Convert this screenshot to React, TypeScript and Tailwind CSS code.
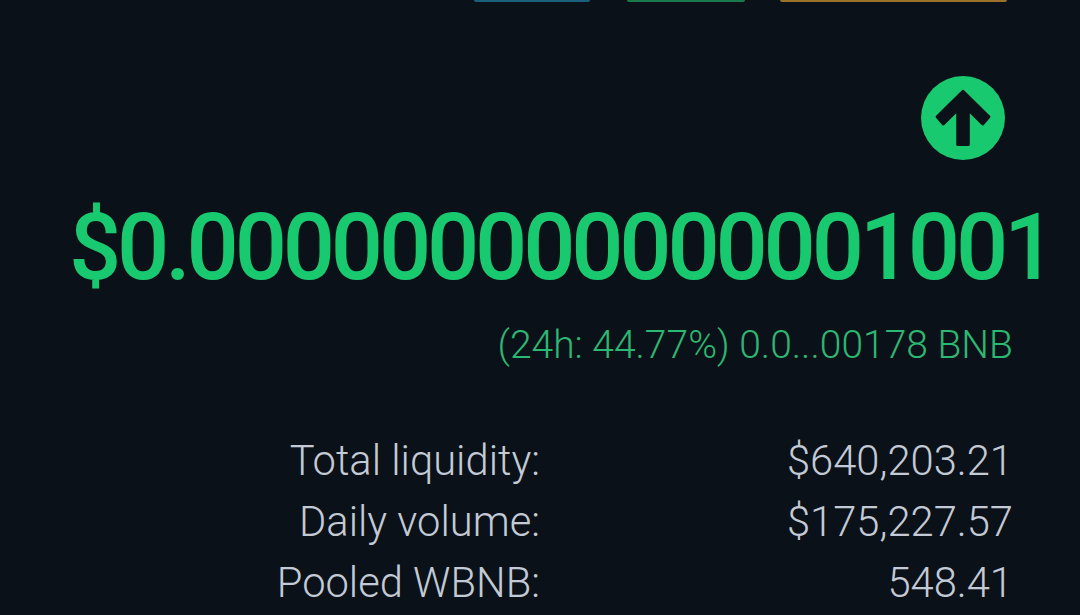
export default function App() {
  const stats = [
    { label: "Total liquidity:", value: "$640,203.21" },
    { label: "Daily volume:", value: "$175,227.57" },
    { label: "Pooled WBNB:", value: "548.41" },
  ];

  return (
    <div className="w-[1080px] h-[615px] overflow-hidden bg-[#0a1118] font-['Roboto',sans-serif]">
      {/* Bottom edges of the buttons cut off at the top */}
      <div className="flex justify-end pr-[73px] h-[2px]">
        <div className="w-[116px] rounded-b-sm bg-[#1a5f7c]" />
        <div className="w-[118px] ml-[37px] rounded-b-sm bg-[#1a7a4c]" />
        <div className="w-[227px] ml-[35px] rounded-b-sm bg-[#9a7128]" />
      </div>

      <div className="flex justify-end pr-[75px] mt-[74px]">
        <svg width="84" height="84" viewBox="0 0 84 84">
          <circle cx="42" cy="42" r="42" fill="#19c970" />
          <path
            d="M42 15.4 L16.1 40.7 L22.3 47.9 L36.7 33.7 V68.5 H47.3 V33.7 L61.7 47.9 L67.9 40.7 Z"
            fill="#0a1118"
            stroke="#0a1118"
            strokeWidth="3"
            strokeLinejoin="round"
          />
        </svg>
      </div>

      <div className="mt-[33px] pl-[69px] text-[92px] leading-[110px] tracking-[-4.2px] font-medium text-[#19c970] whitespace-nowrap">
        $0.000000000000001001
      </div>

      <div className="mt-[20px] pr-[67px] text-right text-[39px] leading-[44px] font-light text-[#2ab872] whitespace-nowrap">
        (24h: 44.77%) 0.0...00178 BNB
      </div>

      <div className="mt-[70px] grid grid-cols-[540px_473px] gap-y-[13px] text-[41.7px] leading-[48px] font-light text-[#c3cad6]">
        {stats.map((s) => (
          <div key={s.label} className="contents">
            <div className="text-right whitespace-nowrap">{s.label}</div>
            <div className="text-right whitespace-nowrap">{s.value}</div>
          </div>
        ))}
      </div>
    </div>
  );
}
